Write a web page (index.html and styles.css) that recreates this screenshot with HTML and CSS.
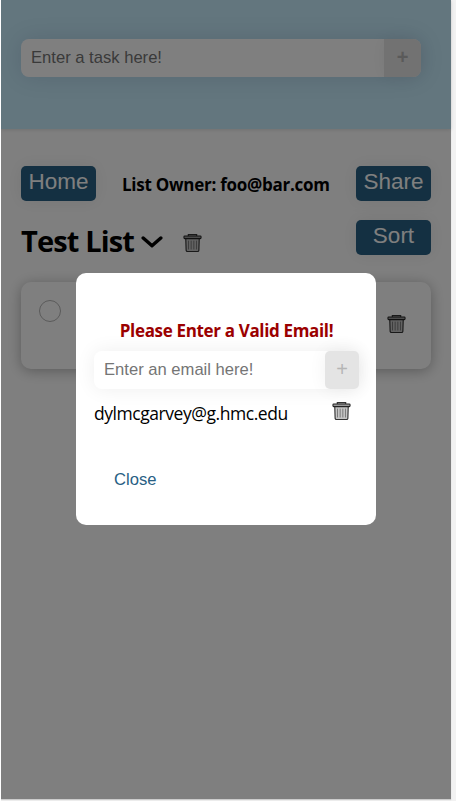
FILE: index.html
```html
<!DOCTYPE html>
<html lang="en">
<head>
<meta charset="utf-8">
<title>Test List</title>
<link rel="stylesheet" href="styles.css">
</head>
<body>
<svg width="0" height="0" class="defs">
  <symbol id="trash" viewBox="0 0 20 20">
    <path d="M2.9 5.2h14.2l-.4 12.6q-.1 1.2-1.3 1.2H4.6q-1.2 0-1.3-1.2z" fill="#c4c4c4" stroke="#333" stroke-width="1.2"/>
    <path d="M5.6 2.6V1h8.8v1.6" fill="#aaa" stroke="#333" stroke-width="1.2"/>
    <rect x="1" y="2.6" width="18" height="2.8" rx=".8" fill="#999" stroke="#222" stroke-width="1.1"/>
    <path d="M5.8 7.5v9.3M8.6 7.5v9.3M11.4 7.5v9.3M14.2 7.5v9.3" stroke="#777" stroke-width="1"/>
  </symbol>
</svg>
<div class="app">
  <header class="header">
    <div class="field task-field">
      <input class="input" type="text" placeholder="Enter a task here!">
      <button class="add">+</button>
    </div>
  </header>
  <main class="main">
    <div class="row top-row">
      <button class="button">Home</button>
      <span class="owner">List Owner: foo@bar.com</span>
      <button class="button">Share</button>
    </div>
    <div class="row title-row">
      <h1 class="title">Test List</h1>
      <svg class="chevron" viewBox="0 0 22 14"><path d="M2.2 3 11 10.8 19.8 3" fill="none" stroke="#000" stroke-width="3.4" stroke-linecap="round" stroke-linejoin="round"/></svg>
      <svg class="trash"><use href="#trash"/></svg>
      <button class="button sort">Sort</button>
    </div>
    <div class="card">
      <span class="circle"></span>
      <svg class="trash"><use href="#trash"/></svg>
    </div>
  </main>
  <div class="overlay">
    <div class="dialog">
      <div class="error">Please Enter a Valid Email!</div>
      <div class="field email-field">
        <input class="input" type="text" placeholder="Enter an email here!">
        <button class="add">+</button>
      </div>
      <div class="person">
        <span class="email">dylmcgarvey@g.hmc.edu</span>
        <svg class="trash"><use href="#trash"/></svg>
      </div>
      <button class="close">Close</button>
    </div>
  </div>
</div>
</body>
</html>
```
FILE: styles.css
```css
* { box-sizing: border-box; }
html { background: #f2f2f2; }
body {
  margin: 0;
  height: 801px;
  overflow: hidden;
  font-family: "Open Sans", "Noto Sans", sans-serif;
  border-left: 1px solid #fff;
}
.defs { display: block; }
.app {
  position: relative;
  width: 450px;
  height: 799px;
  background: #fff;
  box-shadow: 0 1px 1px #ccc;
}
.header {
  height: 129px;
  padding: 39px 20px 0;
  background: #c6ecfc;
  box-shadow: 0 1px 4px rgba(0,0,0,.12);
}
.field {
  display: flex;
  height: 38px;
  border-radius: 8px;
  background: #fff;
  box-shadow: 0 0 24px rgba(0,0,60,.12);
}
.task-field { width: 400px; }
.input {
  flex: 1;
  min-width: 0;
  height: 38px;
  padding: 0 10px;
  border: 0;
  background: transparent;
  font: 16.6px "Liberation Sans", sans-serif;
}
.input::placeholder { color: #757575; opacity: 1; }
.add {
  width: 37px;
  padding: 0 0 2px;
  border: 0;
  border-radius: 0 8px 8px 0;
  background: #e4e4e4;
  color: #b5b5b5;
  font: 20px "Liberation Sans", sans-serif;
  box-shadow: 0 0 18px rgba(0,0,0,.06);
}
.task-field .add { font-weight: bold; }
.main { padding: 37px 20px 0; }
.row { display: flex; }
.top-row { justify-content: space-between; width: 410px; }
.button {
  width: 75px;
  height: 35px;
  padding: 0 0 3px;
  border: 0;
  border-radius: 5px;
  background: #286084;
  color: #fff;
  font: 22.5px "Liberation Sans", sans-serif;
  box-shadow: 0 0 18px rgba(0,0,0,.08);
}
.owner {
  width: 208px;
  margin: 6px 0 0;
  white-space: nowrap;
  font-size: 17px;
  line-height: 25px;
  font-weight: 700;
  letter-spacing: -.26px;
}
.title-row { align-items: center; height: 35px; margin-top: 19px; width: 410px; }
.title {
  width: 113px;
  margin: 7px 7px 0 0;
  white-space: nowrap;
  font-size: 29px;
  line-height: 36px;
  letter-spacing: -.85px;
}
.chevron { width: 22px; height: 14px; margin: 8px 20px 0 0; }
.trash { width: 19px; height: 20px; flex: none; }
.title-row .trash { margin-top: 10px; }
.sort { margin-left: auto; }
.card {
  display: flex;
  justify-content: space-between;
  width: 410px;
  height: 87px;
  margin-top: 27px;
  padding: 18px 25px 0 18px;
  border-radius: 10px;
  box-shadow: 0 2px 14px rgba(0,0,0,.3);
}
.circle { width: 22px; height: 22px; border: 1px solid #b5b5b5; border-radius: 50%; }
.card .trash { margin-top: 14px; }
.overlay {
  position: absolute;
  inset: 0;
  display: flex;
  justify-content: center;
  align-items: flex-start;
  padding-top: 273px;
  background: rgba(0,0,0,.5);
}
.dialog {
  width: 300px;
  height: 252px;
  padding: 44px 17px 0 18px;
  border-radius: 10px;
  background: #fff;
}
.error {
  height: 34px;
  line-height: 27px;
  text-align: center;
  white-space: nowrap;
  color: #9b0000;
  font-size: 17px;
  font-weight: 700;
  letter-spacing: -.34px;
}
.email-field { box-shadow: 0 0 20px rgba(0,0,0,.07); }
.email-field .add { width: 34px; border-radius: 5px; }
.person { display: flex; justify-content: space-between; padding: 12px 8px 0 0; height: 58px; }
.email { font-size: 17.5px; line-height: 25px; letter-spacing: -.45px; white-space: nowrap; }
.close {
  display: block;
  height: 38px;
  margin-left: 20px;
  margin-top: 14px;
  padding: 0;
  border: 0;
  background: none;
  color: #286084;
  font: 16.6px "Liberation Sans", sans-serif;
}
```
